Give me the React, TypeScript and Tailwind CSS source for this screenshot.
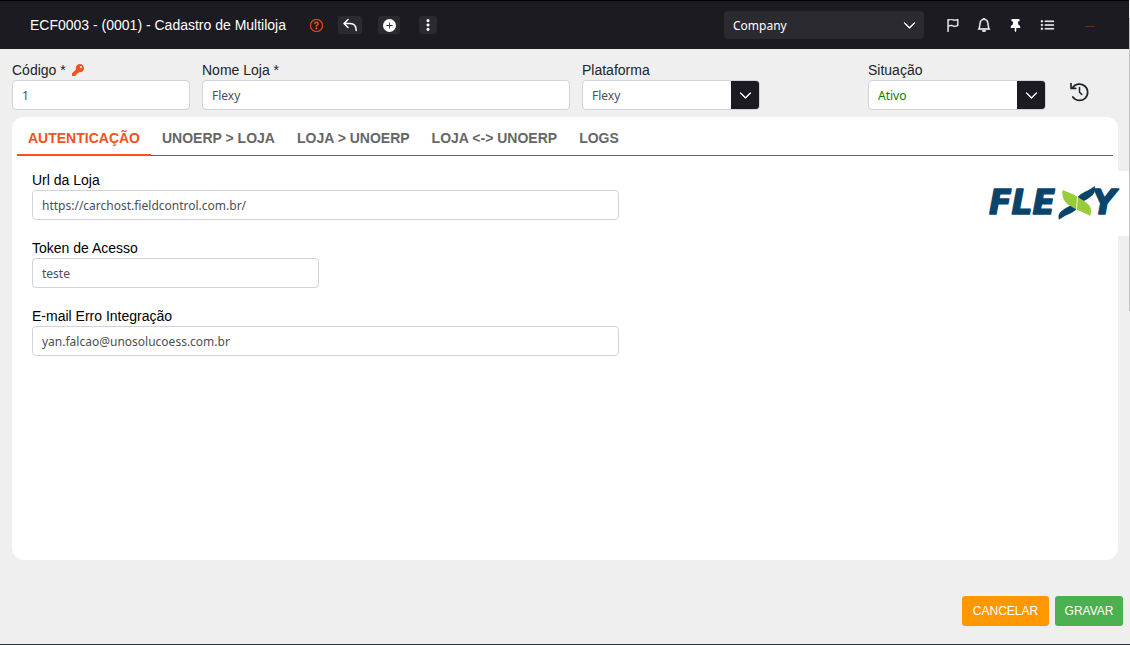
import { useState } from "react";
import type { ReactNode } from "react";
import {
  BsBell,
  BsChevronDown,
  BsFlag,
  BsListUl,
  BsPlusCircleFill,
  BsQuestionCircle,
  BsThreeDotsVertical,
} from "react-icons/bs";
import { FaKey, FaThumbtack } from "react-icons/fa";

const inputClass =
  "h-[30px] w-full rounded border border-[#ced4da] bg-white px-[9px] font-['Noto_Sans',sans-serif] text-xs text-[#495057] outline-none focus:border-[#ff5722]";

type FieldProps = { id: string; label: string; mark?: ReactNode; children: ReactNode };

function Field({ id, label, mark, children }: FieldProps) {
  return (
    <div className="flex min-w-0 flex-col">
      <label htmlFor={id} className="flex h-5 items-center gap-1.5">
        {label}
        {mark}
      </label>
      {children}
    </div>
  );
}

function SelectBox({ id, value, tone }: { id: string; value: string; tone: string }) {
  return (
    <div className="relative">
      <select id={id} className={`appearance-none pt-0.5 pr-8 ${inputClass} ${tone}`}>
        <option>{value}</option>
      </select>
      <span className="pointer-events-none absolute inset-y-px right-px flex w-7 items-center justify-center rounded-r-[3px] bg-[#1c1b21] text-white">
        <BsChevronDown className="size-[13px]" strokeWidth={1} />
      </span>
    </div>
  );
}

function BackIcon() {
  return (
    <svg
      viewBox="0 0 16 14"
      className="h-[14px] w-4"
      fill="none"
      stroke="currentColor"
      strokeWidth="1.5"
      strokeLinecap="round"
      strokeLinejoin="round"
    >
      <path d="M6 1.500 L2 5.500 L6 9.500 M2 5.500 H8 C12 5.500 14.200 8 14.200 12.500" />
    </svg>
  );
}

function HistoryIcon() {
  return (
    <svg
      viewBox="0 0 20 20"
      className="size-5"
      fill="none"
      stroke="currentColor"
      strokeWidth="1.7"
      strokeLinecap="round"
      strokeLinejoin="round"
    >
      <path d="M2.800 15 A8.200 8.200 0 1 0 2.600 5.800" />
      <path d="M1 1.500 V6.300 H5.800" />
      <path d="M9.500 5.600 V10.200 L11.800 12.500" strokeWidth="1.500" />
    </svg>
  );
}

function FlexyLogo() {
  return (
    <svg viewBox="0 -9 132 53" className="h-[53px] w-[132px]" role="img" aria-label="Flexy">
      <g
        fill="#08446c"
        stroke="#08446c"
        strokeWidth="1.4"
        strokeLinejoin="round"
        fontFamily="'DejaVu Sans', sans-serif"
        fontWeight="700"
        fontStyle="italic"
        fontSize="33"
      >
        <text x="0" y="28">FLE</text>
        <text x="103" y="28">Y</text>
      </g>
      <path
        d="M70 33.700 C69 30 69.500 27.500 72.500 25 C77 21.500 82 19 87 17 L88.500 20.500 C88 23 86.500 24.800 83.500 26.300 C79 28.500 74.500 30.500 70 33.700Z"
        fill="#08446c"
      />
      <path
        d="M105.700 0 C106.300 3 106.200 6 104 8.800 C101 12 96 15 90.500 17 L88 14 C88.500 11 89.800 9.300 92.500 7.700 C97 5 101.500 3.500 105.700 0Z"
        fill="#08446c"
      />
      <path
        d="M73.700 4 C78 6 84 7.500 88.500 10.800 C93 14 97 15.800 99.800 19 C102.500 22 102.500 25.500 101.300 29.900 C96 27 87 24 80.500 19.500 C74.500 15.500 72.500 10 73.700 4Z"
        fill="#9acb3b"
      />
      <path d="M88.500 10.500 L87.500 24" stroke="#fff" strokeWidth="0.8" />
    </svg>
  );
}

const tabs = ["AUTENTICAÇÃO", "UNOERP > LOJA", "LOJA > UNOERP", "LOJA <-> UNOERP", "LOGS"];

export default function App() {
  const [active, setActive] = useState(0);
  const chip = "flex h-[18px] items-center justify-center rounded-[3px] bg-[#2b2a31]";

  return (
    <div className="flex min-h-screen border-b border-[#263640] bg-[#efefef] font-['Liberation_Sans',Arial,sans-serif] text-sm text-[#212529]">
      <div className="flex min-w-0 flex-1 flex-col">
        <header className="flex h-[49px] items-center border-t border-black bg-[#1c1b21] pr-[34px] pl-[30px] text-white">
          <h1 className="whitespace-nowrap">ECF0003 - (0001) - Cadastro de Multiloja</h1>
          <button aria-label="Ajuda" className="ml-6 text-[#f4511e]">
            <BsQuestionCircle className="size-[13px]" strokeWidth={0.5} />
          </button>
          <button aria-label="Voltar" className={`ml-[15px] w-6 ${chip}`}>
            <BackIcon />
          </button>
          <button aria-label="Adicionar" className={`ml-4 w-[22px] ${chip}`}>
            <BsPlusCircleFill className="size-[13px]" />
          </button>
          <button aria-label="Mais opções" className={`ml-[19px] w-[18px] ${chip}`}>
            <BsThreeDotsVertical className="size-[14px]" strokeWidth={0.5} />
          </button>
          <div className="relative ml-auto w-[200px]">
            <select
              aria-label="Empresa"
              className="h-7 w-full appearance-none rounded bg-[#2b2a31] pt-0.5 pr-8 pl-[9px] font-['Noto_Sans',sans-serif] text-xs text-white outline-none"
            >
              <option>Company</option>
            </select>
            <BsChevronDown
              className="pointer-events-none absolute top-2 right-2 size-[13px]"
              strokeWidth={1}
            />
          </div>
          <nav className="ml-[22px] flex items-center gap-[18px]">
            <button aria-label="Marcadores">
              <BsFlag className="size-[13px]" strokeWidth={0.6} />
            </button>
            <button aria-label="Notificações">
              <BsBell className="size-[14px]" strokeWidth={0.6} />
            </button>
            <button aria-label="Fixar">
              <FaThumbtack className="size-[13px]" />
            </button>
            <button aria-label="Lista">
              <BsListUl className="size-[15px]" strokeWidth={0.5} />
            </button>
          </nav>
          <span className="mt-0.5 ml-[30px] h-px w-[10px] bg-[#5c2f1e]" />
        </header>

        <main className="flex flex-1 flex-col">
          <div className="grid grid-cols-[178fr_368fr_178fr_84fr_178fr_60fr] gap-x-3 pt-[11px] pr-[11px] pl-3">
            <Field
              id="codigo"
              label="Código *"
              mark={<FaKey className="size-3 text-[#f4511e]" />}
            >
              <input id="codigo" defaultValue="1" className={inputClass} />
            </Field>
            <Field id="nome" label="Nome Loja *">
              <input id="nome" defaultValue="Flexy" className={inputClass} />
            </Field>
            <Field id="plataforma" label="Plataforma">
              <SelectBox id="plataforma" value="Flexy" tone="" />
            </Field>
            <span />
            <Field id="situacao" label="Situação">
              <SelectBox id="situacao" value="Ativo" tone="text-[#008000]!" />
            </Field>
            <div className="flex items-center pt-3.5 pl-3">
              <button aria-label="Histórico">
                <HistoryIcon />
              </button>
            </div>
          </div>

          <section className="mt-[7px] mr-[11px] ml-3 min-h-[443px] rounded-xl bg-white px-[5px]">
            <div role="tablist" className="flex h-[39px] border-b border-[#666]">
              {tabs.map((tab, i) => (
                <button
                  key={tab}
                  role="tab"
                  aria-selected={active === i}
                  onClick={() => setActive(i)}
                  className={
                    active === i
                      ? "-mb-px border-b-2 border-[#f4511e] px-[11px] pt-1 font-bold text-[#f4511e]"
                      : "-mb-px border-b-2 border-transparent px-[11px] pt-1 font-bold text-[#666]"
                  }
                >
                  {tab}
                </button>
              ))}
            </div>
            <div className="flex items-start justify-between pl-[15px] text-black">
              <div className="flex w-[587px] flex-col gap-[18px] pt-[14px]">
                <Field id="url" label="Url da Loja">
                  <input id="url" defaultValue="https://carchost.fieldcontrol.com.br/" className={inputClass} />
                </Field>
                <div className="w-[287px]">
                  <Field id="token" label="Token de Acesso">
                    <input id="token" defaultValue="teste" className={inputClass} />
                  </Field>
                </div>
                <Field id="email" label="E-mail Erro Integração">
                  <input id="email" type="email" defaultValue="yan.falcao@unosolucoess.com.br" className={inputClass} />
                </Field>
              </div>
              <div className="mt-[15px] -mr-4 flex h-[65px] items-center bg-white pr-2">
                <FlexyLogo />
              </div>
            </div>
          </section>

          <footer className="mt-auto flex justify-end gap-1.5 pr-1.5 pb-[18px] text-xs text-white">
            <button className="h-[30px] w-[87px] rounded-[3px] bg-[#ff9800]">CANCELAR</button>
            <button className="h-[30px] w-[68px] rounded-[3px] bg-[#4caf50]">GRAVAR</button>
          </footer>
        </main>
      </div>
      <div className="w-px">
        <div className="h-[18px] bg-[#efefef]" />
        <div className="h-[293px] bg-[#c1c1c1]" />
      </div>
    </div>
  );
}
